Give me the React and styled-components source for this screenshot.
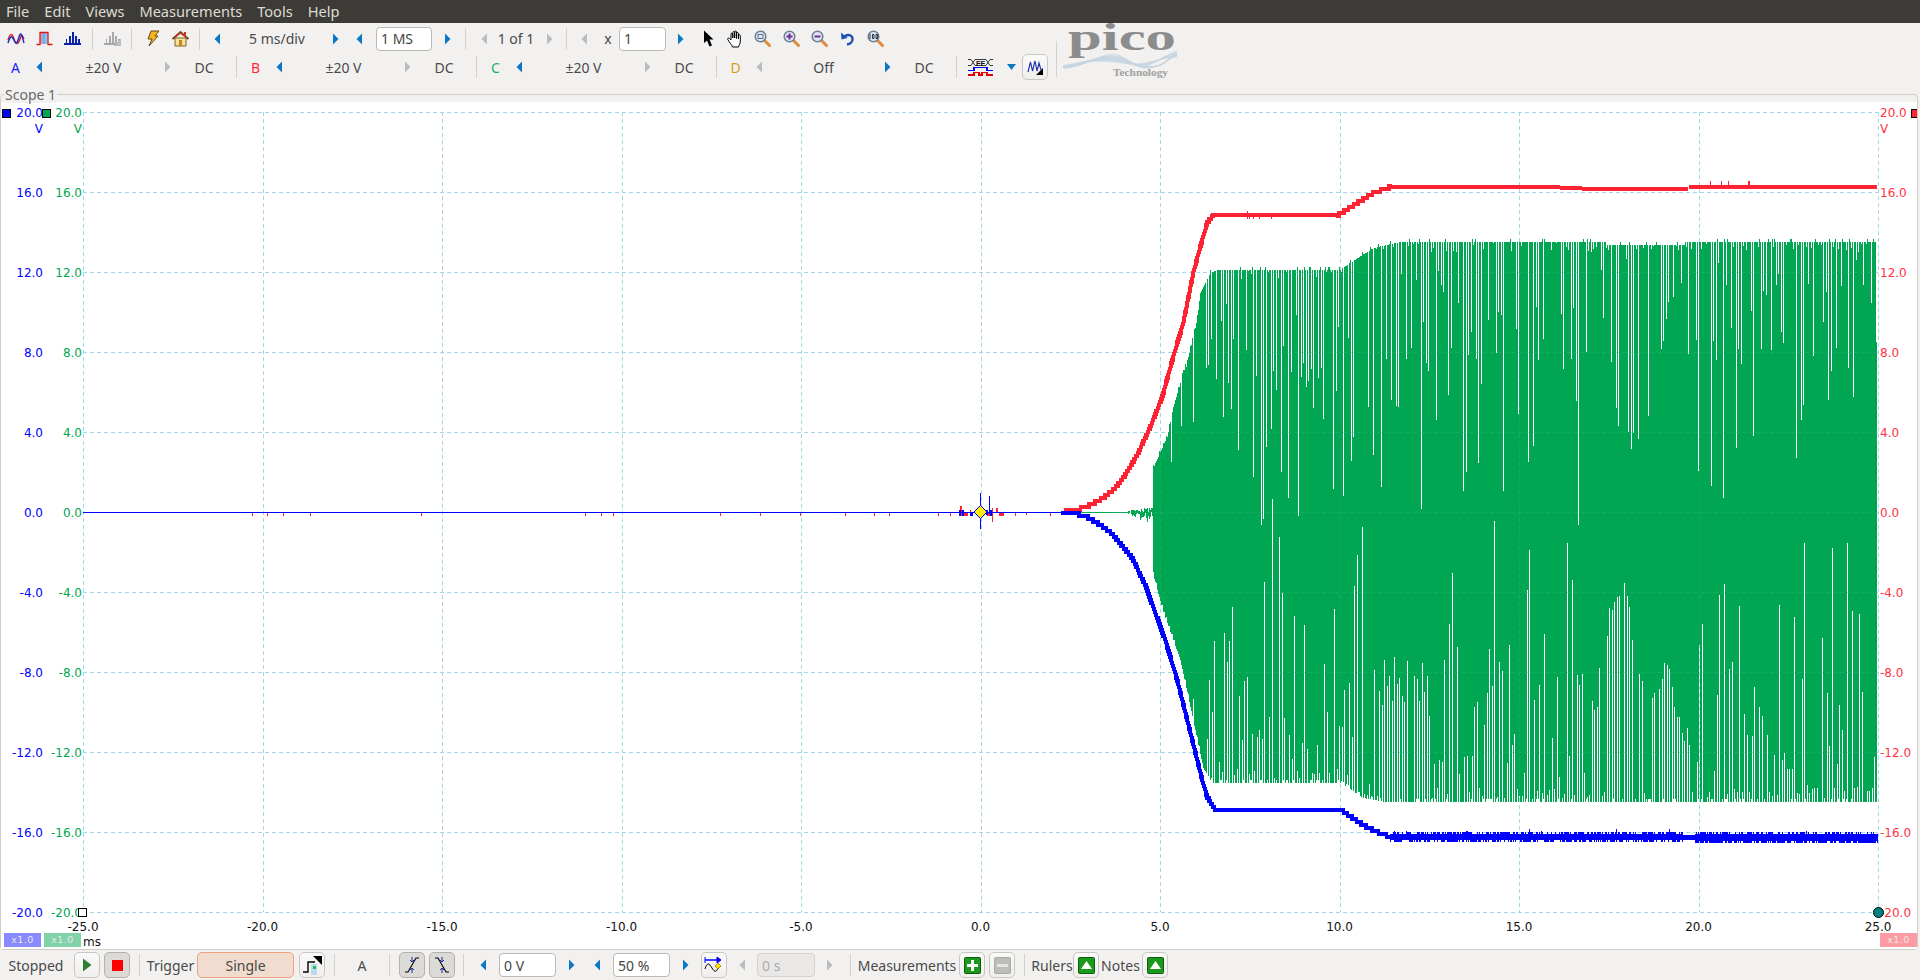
import React from 'react';
import styled, { createGlobalStyle } from 'styled-components';

const GlobalStyle = createGlobalStyle`
  html, body { margin: 0; padding: 0; height: 980px; background: #f2f1f0; overflow: hidden; }
  body { font-family: "Noto Sans", "Open Sans", sans-serif; }
`;

const UI_FONT = '"Noto Sans", "Open Sans", sans-serif';
const BLUE = '#0000ff';
const RED = '#ff2233';
const GREEN = '#00a651';
const GRID = '#a6d9e8';

const Page = styled.div`
  width: 1920px;
  height: 980px;
  overflow: hidden;
  display: flex;
  flex-direction: column;
  background: #f2f1f0;
  color: #4a4a4a;
  font: 14px ${UI_FONT};
`;
const MenuBar = styled.div`
  height: 23px;
  flex: none;
  display: flex;
  align-items: center;
  padding-left: 6px;
  gap: 15px;
  background: #3c3b37;
  color: #dfdbd2;
  font-size: 14.600px;
  line-height: 23px;
`;
const Toolbar = styled.div`
  height: 71px;
  flex: none;
  display: flex;
`;
const ToolbarRows = styled.div`
  width: 1050px;
  padding-top: 1px;
`;
const Row = styled.div`
  height: 28px;
  display: flex;
  align-items: center;
`;
const RowOne = styled(Row)`
  height: 29px;
  padding-left: 2px;
`;
const Slot = styled.div`
  width: ${p => p.$w}px;
  flex: none;
  height: 100%;
  display: flex;
  align-items: center;
  justify-content: center;
  white-space: nowrap;
  color: ${p => p.$c || 'inherit'};
`;
const Sep = styled.div`
  width: 1px;
  height: ${p => p.$h || 22}px;
  background: #d3d1cd;
`;
const Channel = styled.div`
  width: 240px;
  height: 100%;
  flex: none;
  display: flex;
`;
const Field = styled.input`
  width: ${p => p.$w}px;
  height: 24px;
  flex: none;
  box-sizing: border-box;
  padding: 0 4px;
  border: 1px solid ${p => p.disabled ? '#d4d2ce' : '#bcb9b4'};
  border-radius: 4px;
  background: ${p => p.disabled ? '#eae8e6' : '#fff'};
  color: ${p => p.disabled ? '#aaa' : '#444'};
  font: 14px ${UI_FONT};
`;
const ToolButton = styled.div`
  width: 26px;
  height: 26px;
  flex: none;
  box-sizing: border-box;
  display: flex;
  align-items: center;
  justify-content: center;
  border: 1px solid ${p => p.$pressed ? '#b4b2ae' : '#c9c7c3'};
  border-radius: 5px;
  background: ${p => p.$pressed ? '#dcdad7' : 'linear-gradient(#fbfafa, #f0efed)'};
`;
const TriggerMode = styled.div`
  width: 97px;
  height: 26px;
  box-sizing: border-box;
  display: flex;
  align-items: center;
  justify-content: center;
  border: 1px solid #eca283;
  border-radius: 5px;
  background: #f1dccf;
`;
const LogoWrap = styled.div`
  margin: 2px 0 0 1px;
  svg { overflow: visible; display: block; }
`;
const ScopePanel = styled.div`
  position: relative;
  flex: none;
  width: 1918px;
  height: 856px;
  box-sizing: border-box;
  padding-top: 7px;
  border: 1px solid #d0cec9;
  border-radius: 4px;
  background: #f2f1f0;
`;
const Legend = styled.div`
  position: absolute;
  left: 3px;
  top: -9px;
  padding: 0 1px;
  background: #f2f1f0;
  color: #6a6a6a;
  font-size: 14px;
  line-height: 17px;
`;
const Plot = styled.svg`
  display: block;
  background: #fff;
`;
const AxisText = styled.text`
  font: 12px "DejaVu Sans", sans-serif;
  fill: ${p => p.$c};
  text-anchor: ${p => p.$anchor || 'start'};
`;
const Badge = styled.div`
  position: absolute;
  top: 838px;
  left: ${p => p.$left}px;
  width: 37px;
  height: 14px;
  background: ${p => p.$bg};
  color: #e8e8e8;
  font: 9.500px/14px "DejaVu Sans", sans-serif;
  letter-spacing: 0.4px;
  text-align: center;
`;
const BottomBar = styled.div`
  height: 30px;
  flex: none;
  display: flex;
  align-items: center;
`;

/* ---- chart data ---- */
const X0 = 83, X1 = 1878, Y0 = 112, Y1 = 912, ZERO = 512;
const STEP_X = (X1 - X0) / 10;

const seeded = seed => () => {
  seed = (seed + 0x6d2b79f5) | 0;
  let t = Math.imul(seed ^ (seed >>> 15), 1 | seed);
  t = (t + Math.imul(t ^ (t >>> 7), 61 | t)) ^ t;
  return ((t ^ (t >>> 14)) >>> 0) / 4294967296;
};

const interp = (pts, x) => {
  if (x <= pts[0][0]) return pts[0][1];
  for (let i = 1; i < pts.length; i++) {
    if (x <= pts[i][0]) {
      const [a, b] = pts[i - 1];
      const [c, d] = pts[i];
      return b + (d - b) * (x - a) / (c - a);
    }
  }
  return pts[pts.length - 1][1];
};
const bump = (x, c, w) => Math.exp(-((x - c) * (x - c)) / (2 * w * w));

const topEnv = [[1153, 468], [1160, 452], [1167, 437], [1173, 407], [1183, 373], [1188, 357], [1193, 337], [1197, 318], [1200, 293], [1210, 273], [1217, 270], [1340, 270], [1345, 266], [1373, 248], [1400, 242], [1605, 242], [1606, 245], [1684, 245], [1685, 242], [1878, 242]];
const botEnv = [[1153, 575], [1163, 612], [1173, 640], [1180, 660], [1188, 697], [1197, 740], [1203, 768], [1212, 783], [1340, 783], [1345, 786], [1363, 798], [1385, 802], [1878, 802]];

// white slits cut from the top and the bottom of the burst
const topDepth = (rnd, x) => {
  const u = rnd();
  if (x > 1605 && x < 1682) return u < 0.3 ? rnd() * 15 : 10 + 170 * bump(x, 1632, 20) + rnd() * 45;
  if (u < 0.28) return 1 + rnd() * 10;
  if (u < 0.7) return 20 + rnd() * 100;
  if (u < 0.93) return 100 + rnd() * 130;
  return 230 + rnd() * 60;
};
const botDepth = (rnd, x) => {
  const u = rnd();
  if (x > 1380 && x < 1430) return 85 + rnd() * 60;
  if (x > 1590 && x < 1690) {
    if (u < 0.25) return 3 + rnd() * 10;
    return 30 + 170 * bump(x, 1618, 16) + 80 * bump(x, 1665, 12) + rnd() * 30;
  }
  if (u < 0.32) return 3 + rnd() * 12;
  if (u < 0.72) return 20 + rnd() * 110;
  if (u < 0.94) return 130 + rnd() * 100;
  return 230 + rnd() * 55;
};

const buildGreen = () => {
  const rnd = seeded(2024);
  const topCut = {}, botCut = {};
  for (let x = 1153; x < 1878; x += 2.5) {
    const px = Math.round(x);
    if (x > 1205) {
      if (rnd() < 0.78) topCut[px] = topDepth(rnd, x);
      if (rnd() < 0.9) botCut[Math.round(x + 1)] = botDepth(rnd, x);
    } else if (rnd() < 0.3) {
      topCut[px] = 4 + rnd() * 90;
      if (rnd() < 0.4) botCut[px] = 4 + rnd() * 50;
    }
  }
  let d = '';
  for (let c = 1128; c < 1153; c++) {
    const a = (c - 1128) / 25;
    d += `M${c + 0.5} ${Math.round(ZERO - rnd() * (1 + a * 5))}V${Math.round(ZERO + rnd() * (2 + a * 12))}`;
  }
  for (let c = 1153; c < 1877; c++) {
    const top = Math.round(interp(topEnv, c)) - (rnd() < 0.14 ? 3 : 0);
    const bot = Math.round(interp(botEnv, c)) - (rnd() < 0.18 ? 3 : 0);
    const a = top + (topCut[c] || 0);
    const b = bot - (botCut[c] || 0);
    if (b > a) d += `M${c + 0.5} ${Math.round(a)}V${Math.round(b)}`;
  }
  return d;
};

// ramps of the channel traces are stepped blocks, as the sampled display draws them
const blocky = pts => {
  const seen = new Set();
  let d = '';
  for (let x = pts[0][0]; x <= pts[pts.length - 1][0]; x += 0.5) {
    const qx = Math.round(x);
    const qy = Math.round(interp(pts, x) / 3) * 3;
    const key = `${qx}:${qy}`;
    if (!seen.has(key)) {
      seen.add(key);
      d += `M${qx - 2} ${qy - 2}h4v4h-4z`;
    }
  }
  return d;
};

const redRampA = [[1066, 511], [1083, 508], [1092, 504], [1103, 498], [1115, 488], [1125, 475], [1138, 453], [1150, 427], [1162, 397], [1173, 357], [1183, 323], [1193, 273], [1200, 247], [1207, 223], [1213, 215]];
const redRampB = [[1338, 215], [1343, 212], [1357, 203], [1373, 193], [1390, 187]];
const blueRampA = [[1063, 514], [1077, 514], [1087, 517], [1097, 523], [1110, 532], [1123, 547], [1132, 558], [1145, 585], [1165, 640], [1177, 680], [1187, 720], [1195, 752], [1202, 780], [1207, 797], [1215, 810]];
const blueRampB = [[1342, 810], [1345, 813], [1363, 825], [1377, 832], [1390, 837]];

const buildRedTicks = () => {
  const rnd = seeded(77);
  let d = '';
  for (let x = 1236; x < 1275; x += 2 + Math.floor(rnd() * 5)) d += `M${x + 0.5} ${rnd() > 0.5 ? 211 : 213}V${rnd() > 0.5 ? 219 : 217}`;
  [1710, 1721, 1728, 1748, 1749].forEach(x => { d += `M${x + 0.5} 181V186`; });
  return d;
};
const buildBlueNoise = () => {
  const rnd = seeded(5);
  let d = '';
  for (let x = 1390; x < 1878; x++) {
    const flat = x > 1682 && x < 1695;
    const early = x < 1689;
    const t = flat ? 835 : (rnd() < 0.5 ? 832 : 834) - (rnd() < 0.015 ? 3 : 0);
    const b = flat ? 840 : early ? (rnd() < 0.55 ? 842 : 840) : (rnd() < 0.75 ? 843 : 841);
    d += `M${x + 0.5} ${t}V${b}`;
  }
  return d;
};

const GREEN_PATH = buildGreen();
const RED_PATH = blocky(redRampA) + blocky(redRampB);
const BLUE_PATH = blocky(blueRampA) + blocky(blueRampB);
const RED_TICKS = buildRedTicks();
const BLUE_NOISE = buildBlueNoise();
const PRE_RED = [252, 267, 283, 310, 421, 585, 601, 613, 720, 760, 800, 845, 874, 889, 938, 950, 1000, 1015, 1050];
const NEAR_ZERO_RED = [[960, 506, 2, 10], [963, 512, 5, 4], [970, 510, 1, 6], [987, 512, 3, 4], [992, 508, 1, 14], [996, 508, 2, 5], [999, 512, 1, 4], [1001, 512, 3, 4], [1015, 512, 1, 3], [1026, 512, 1, 3]];
const NEAR_ZERO_BLUE = [[959, 510, 2, 6], [962, 510, 2, 6], [970, 512, 3, 4], [976, 510, 2, 5], [980, 493, 1, 36], [986, 510, 2, 5], [989, 496, 1, 18], [990, 510, 2, 6]];
const VALUES = [20, 16, 12, 8, 4, 0, -4, -8, -12, -16, -20];
const TIMES = [-25, -20, -15, -10, -5, 0, 5, 10, 15, 20, 25];

const GridLines = ({ opacity }) => (
  <g stroke={GRID} strokeWidth="1" strokeDasharray="4 3" opacity={opacity} shapeRendering="crispEdges">
    {VALUES.map((v, i) => <line key={v} x1={X0} x2={X1} y1={Y0 + i * 80 + 0.5} y2={Y0 + i * 80 + 0.5} />)}
    {TIMES.map((t, i) => {
      const x = Math.round(X0 + i * STEP_X) + 0.5;
      return <line key={t} x1={x} x2={x} y1={Y0} y2={Y1} />;
    })}
  </g>
);

const Chart = () => (
  <Plot width="1916" height="847" viewBox="1 102 1916 847">
    <GridLines opacity={1} />
    <g shapeRendering="crispEdges" fill="none">
      <path d="M1077 512.5H1128" stroke={GREEN} strokeWidth="1" />
      <path d={GREEN_PATH} stroke={GREEN} strokeWidth="1" />
    </g>
    <GridLines opacity={0.12} />
    <g shapeRendering="crispEdges" fill="none">
      <path d={PRE_RED.map(x => `M${x + 0.5} 512V516`).join('')} stroke={RED} />
      {NEAR_ZERO_RED.map(([x, y, w, h]) => <rect key={`${x}r`} x={x} y={y} width={w} height={h} fill={RED} />)}
      <path d={RED_PATH} fill={RED} />
      <path d="M1211 215H1340M1388 187H1560M1560 188H1582M1582 189H1688M1689 187H1877" stroke={RED} strokeWidth="4" />
      <path d={RED_TICKS} stroke={RED} />
      <path d="M83 512.5H1066" stroke={BLUE} strokeWidth="1" />
      {NEAR_ZERO_BLUE.map(([x, y, w, h]) => <rect key={`${x}b`} x={x} y={y} width={w} height={h} fill={BLUE} />)}
      <path d={BLUE_PATH} fill={BLUE} />
      <path d="M1213 810H1344" stroke={BLUE} strokeWidth="4" />
      <path d={BLUE_NOISE} stroke={BLUE} />
    </g>
    <path d="M980.5 505.5L987 512L980.5 518.5L974 512Z" fill="#ffee00" stroke={BLUE} strokeWidth="1" />

    {VALUES.map((v, i) => {
      const y = Y0 + i * 80 + 5;
      const s = v.toFixed(1);
      return (
        <g key={v}>
          <AxisText x={43} y={y} $c={BLUE} $anchor="end">{s}</AxisText>
          <AxisText x={82} y={y} $c={GREEN} $anchor="end">{s}</AxisText>
          <AxisText x={1880} y={y} $c="#ff3344">{s}</AxisText>
        </g>
      );
    })}
    <AxisText x={43} y={133} $c={BLUE} $anchor="end">V</AxisText>
    <AxisText x={82} y={133} $c={GREEN} $anchor="end">V</AxisText>
    <AxisText x={1880} y={133} $c="#ff3344">V</AxisText>
    {TIMES.map((t, i) => (
      <AxisText key={t} x={X0 + i * STEP_X} y={931} $c="#111" $anchor="middle">{t.toFixed(1)}</AxisText>
    ))}
    <AxisText x={83} y={946} $c="#111">ms</AxisText>

    <g shapeRendering="crispEdges" stroke="#000">
      <rect x="2.5" y="109.5" width="8" height="8" fill={BLUE} />
      <rect x="42.5" y="109.5" width="8" height="8" fill={GREEN} />
      <rect x="1911.5" y="109.5" width="7" height="8" fill={RED} />
      <rect x="78.5" y="908.5" width="8" height="8" fill="#fff" />
    </g>
    <circle cx="1878.5" cy="912.5" r="5" fill="#008080" stroke="#000" />
  </Plot>
);

/* ---- icons ---- */
const Arrow = ({ dir = 'left', off }) => (
  <svg width="7" height="12" viewBox="0 0 7 12">
    <path d={dir === 'left' ? 'M6 0.5V11.5L0.5 6Z' : 'M1 0.5V11.5L6.5 6Z'} fill={off ? '#b9bcbc' : '#0a78c4'} />
  </svg>
);
const WaveIcon = () => (
  <svg width="18" height="14" viewBox="0 0 18 14" fill="none" strokeWidth="1.5">
    <path d="M1 8C3 1 5 1 7 7S11 13 13 7S15 3 17 7" stroke="#e81c24" />
    <path d="M1 11C3 4 5 3 7 8S10 12 12 5S15 4 17 11" stroke="#1c34c8" />
  </svg>
);
const PulseIcon = () => (
  <svg width="17" height="15" viewBox="0 0 17 15" fill="none">
    <defs>
      <linearGradient id="pulseFill"><stop offset="0" stopColor="#f0a0a0" /><stop offset=".5" stopColor="#60b0f0" /><stop offset="1" stopColor="#a0d8f8" /></linearGradient>
    </defs>
    <rect x="4" y="2" width="8" height="11" fill="url(#pulseFill)" />
    <path d="M0.5 13.5H4V1.5H12V13.5H16.5" stroke="#e01818" strokeWidth="1.3" />
  </svg>
);
const BarsIcon = ({ color = '#0a22a8', shade }) => (
  <svg width="17" height="15" viewBox="0 0 17 15" shapeRendering="crispEdges">
    <path d="M0 12H17V13.5H0ZM1.5 8H3V12H1.5ZM5 5H6.5V12H5ZM8 1H9.500V12H8ZM11 5H12.5V12H11ZM14 8H15.500V12H14Z" fill={color} />
    {shade && <path d="M9 15L17 7V15Z" fill="#bdbdbd" />}
  </svg>
);
const BoltIcon = () => (
  <svg width="14" height="17" viewBox="0 0 14 17">
    <path d="M5 1H13L9 6H12L3 16L6 9H2Z" fill="#f5b51e" stroke="#6a4a10" strokeWidth="1" strokeLinejoin="round" />
  </svg>
);
const HomeIcon = () => (
  <svg width="17" height="16" viewBox="0 0 17 16">
    <path d="M3 7H14V15H3Z" fill="#f6e39a" stroke="#7a6420" />
    <rect x="7" y="9" width="3" height="6" fill="#c88428" />
    <path d="M0.500 8L8.500 1L16.500 8" fill="none" stroke="#6a4418" strokeWidth="1.800" />
    <path d="M3 6.500L8.500 2L14 6.500" fill="none" stroke="#d83a20" strokeWidth="1.200" />
    <rect x="12" y="1" width="2" height="3.500" fill="#c83418" />
  </svg>
);
const CursorIcon = () => (
  <svg width="11" height="17" viewBox="0 0 11 17">
    <path d="M1 0.500V13L4 10.500L6.500 16.500L9 15.500L6.500 9.500H10.500Z" fill="#000" />
  </svg>
);
const HandIcon = () => (
  <svg width="17" height="18" viewBox="0 0 17 18" fill="#fff" stroke="#000" strokeWidth="1" strokeLinejoin="round">
    <path d="M4 10V4C4 2.800 5.800 2.800 5.800 4V8V2.500C5.800 1.200 7.700 1.200 7.700 2.500V8V2C7.700 .8 9.600 .8 9.600 2V8.500V3.500C9.600 2.300 11.500 2.300 11.500 3.500V9V5.500C11.500 4.500 13.300 4.500 13.300 5.500V11C13.300 14 12 15 11.500 17H5.500C5 15 3.500 14 2 11.500L0.800 9.500C.2 8.300 1.800 7.500 2.500 8.500Z" />
  </svg>
);
const Lens = ({ children }) => (
  <svg width="17" height="17" viewBox="0 0 17 17">
    <path d="M10 10L15.500 15.500" stroke="#e08c3c" strokeWidth="3" strokeLinecap="round" />
    <circle cx="6.500" cy="6.500" r="5.300" fill="#dde6f2" stroke="#6c7f96" strokeWidth="1.500" />
    {children}
  </svg>
);
const UndoIcon = () => (
  <svg width="15" height="15" viewBox="0 0 15 15" fill="none">
    <path d="M4 6C7 3 12 3.500 12.500 7.500C13 11 10 13 7 13.500" stroke="#1e4fb4" strokeWidth="2.400" />
    <path d="M1 1.500L1.500 8.500L7.500 7Z" fill="#1e4fb4" />
  </svg>
);
const DigitalIcon = () => (
  <svg width="25" height="17" viewBox="0 0 25 17" fill="none">
    <path d="M0 .5H3L7 6.500H18L22 .5H25M0 6.500H3L7 .5H18L22 6.500H25" stroke="#222" strokeWidth=".9" />
    <text x="12.500" y="6.500" fontFamily="Liberation Sans" fontSize="7.500" fontWeight="700" textAnchor="middle" fill="#111">FF</text>
    <path d="M0 11.500H6V8.500H19V11.500H25" stroke={BLUE} strokeWidth="1.300" shapeRendering="crispEdges" />
    <path d="M0 16H6V13.500H11V16H14V13.500H19V16H25" stroke="#e00000" strokeWidth="1.300" shapeRendering="crispEdges" />
  </svg>
);
const DropIcon = () => (
  <svg width="9" height="6" viewBox="0 0 9 6"><path d="M0 0H9L4.500 6Z" fill="#0a78c4" /></svg>
);
const ProbeWaveIcon = () => (
  <svg width="17" height="17" viewBox="0 0 17 17" fill="none">
    <path d="M1 13L3.500 3L5.500 12L8 2L10 12L12 4L14 11" stroke="#1c2ca8" strokeWidth="1.100" />
    <path d="M16 9V16H9Z" fill="#000" />
  </svg>
);
const PlayIcon = () => (
  <svg width="10" height="14" viewBox="0 0 10 14"><path d="M1 0.500V13.500L9.500 7Z" fill="#2f7d2f" /></svg>
);
const StopIcon = () => (
  <svg width="11" height="11" viewBox="0 0 11 11"><rect width="11" height="11" fill="#ff0000" /></svg>
);
const TriggerIcon = () => (
  <svg width="20" height="20" viewBox="0 0 20 20" fill="none">
    <rect x="9" y="9" width="6" height="11" fill="#bcd8f4" />
    <path d="M1 17H6V7H13" stroke="#000" strokeWidth="1.400" />
    <rect x="11" y="11" width="3" height="3" fill="#20c040" />
    <path d="M11 1H20V10Z" fill="#000" />
  </svg>
);
const EdgeIcon = ({ falling }) => (
  <svg width="16" height="18" viewBox="0 0 16 18" fill="none" transform={falling ? 'scale(-1 1)' : undefined}>
    <path d="M1 16H4L12 2H15" stroke="#000" strokeWidth="1.100" />
    <path d="M8 1V6M6 4L8 6L10 4M8 12V17M6 14L8 12L10 14" stroke="#1c2ca8" strokeWidth="1" />
  </svg>
);
const DelayIcon = () => (
  <svg width="20" height="20" viewBox="0 0 20 20" fill="none">
    <path d="M1 5H15" stroke={BLUE} strokeWidth="1.500" />
    <path d="M1 2V8M13 2L17 5L13 8Z" fill={BLUE} stroke={BLUE} />
    <path d="M1 14C3 7 5 8 8 13S12 17 15 12" stroke="#000" strokeWidth="1" />
    <path d="M14 8L17 11L14 14L11 11Z" fill="#ffdd00" stroke="#806000" strokeWidth=".6" />
  </svg>
);
const SquareGlyph = ({ kind }) => {
  const fill = kind === 'off' ? '#bdbdb9' : '#1a9a1a';
  const mark = kind === 'plus' ? 'M7 3H10V7H14V10H10V14H7V10H3V7H7Z'
    : kind === 'off' ? 'M3 7H14V10H3Z' : 'M8.500 4L14 12H3Z';
  return (
    <svg width="17" height="17" viewBox="0 0 17 17">
      <rect x=".5" y=".5" width="16" height="16" rx="1" fill={fill} stroke={kind === 'off' ? '#a8a8a4' : '#0c5c0c'} />
      <path d={mark} fill={kind === 'off' ? '#e4e4e0' : '#fff'} />
    </svg>
  );
};
const PicoLogo = () => (
  <svg width="118" height="54" viewBox="0 0 118 54" fill="none">
    <text x="5" y="25" fontFamily="Liberation Serif" fontSize="37" fontWeight="700" textLength="108" lengthAdjust="spacingAndGlyphs" fill="#8c8c8c">pico</text>
    {[0, 1, 2, 3, 4, 5, 6].map(i => (
      <g key={i} stroke="#c5d4df" strokeWidth=".7">
        <path d={`M0 ${43 - i * 0.4}C20 ${43 - i}, 32 ${29 + i}, 50 ${31 + i}S72 ${43 - i * 0.5}, 82 ${41 - i * 0.5}S100 ${31 + i * 0.3}, 114 ${26 + i}`} />
        <path d={`M2 43C22 ${41 - i}, 36 31, ${48 + i * 2} ${29 + i * 1.4}S70 ${45 - i}, 86 ${43 - i * 0.3}S104 33, 114 ${28 + i * 0.4}`} />
      </g>
    ))}
    <text x="50" y="51" fontFamily="Liberation Serif" fontSize="10" fontWeight="700" textLength="55" lengthAdjust="spacingAndGlyphs" fill="#a0a0a0">Technology</text>
  </svg>
);

const ChannelGroup = ({ letter, color, range, on, leftOff }) => (
  <Channel>
    <Slot $w={31} $c={color}>{letter}</Slot>
    <Slot $w={16}><Arrow off={leftOff} /></Slot>
    <Slot $w={113}>{range}</Slot>
    <Slot $w={14}><Arrow dir="right" off={!on} /></Slot>
    <Slot $w={60}>DC</Slot>
    <Slot $w={4}><Sep /></Slot>
  </Channel>
);

export default function App() {
  return (
    <Page>
      <GlobalStyle />
      <MenuBar>
        {['File', 'Edit', 'Views', 'Measurements', 'Tools', 'Help'].map(m => <span key={m}>{m}</span>)}
      </MenuBar>
      <Toolbar>
        <ToolbarRows>
          <RowOne>
            <Slot $w={28}><WaveIcon /></Slot>
            <Slot $w={28}><PulseIcon /></Slot>
            <Slot $w={28}><BarsIcon /></Slot>
            <Slot $w={12}><Sep /></Slot>
            <Slot $w={28}><BarsIcon color="#a8a8a8" shade /></Slot>
            <Slot $w={10}><Sep /></Slot>
            <Slot $w={33}><BoltIcon /></Slot>
            <Slot $w={23}><HomeIcon /></Slot>
            <Slot $w={14}><Sep /></Slot>
            <Slot $w={22}><Arrow /></Slot>
            <Slot $w={98}>5 ms/div</Slot>
            <Slot $w={18}><Arrow dir="right" /></Slot>
            <Slot $w={30}><Arrow /></Slot>
            <Slot $w={60}><Field $w={56} value="1 MS" readOnly /></Slot>
            <Slot $w={26}><Arrow dir="right" /></Slot>
            <Slot $w={10}><Sep /></Slot>
            <Slot $w={28}><Arrow off /></Slot>
            <Slot $w={36}>1 of 1</Slot>
            <Slot $w={30}><Arrow dir="right" off /></Slot>
            <Slot $w={4}><Sep /></Slot>
            <Slot $w={33}><Arrow off /></Slot>
            <Slot $w={14}>x</Slot>
            <Slot $w={55}><Field $w={47} value="1" readOnly /></Slot>
            <Slot $w={20}><Arrow dir="right" /></Slot>
            <Slot $w={36}><CursorIcon /></Slot>
            <Slot $w={18}><HandIcon /></Slot>
            <Slot $w={36}><Lens><path d="M4 4.500H9V8.500H4Z" fill="none" stroke="#5a6c90" /></Lens></Slot>
            <Slot $w={22}><Lens><path d="M5.500 3.500H7.500V5.500H9.500V7.500H7.500V9.500H5.500V7.500H3.500V5.500H5.500Z" fill="#7a2a9a" /></Lens></Slot>
            <Slot $w={34}><Lens><path d="M3.500 5.500H9.500V7.500H3.500Z" fill="#7a2a9a" /></Lens></Slot>
            <Slot $w={22}><UndoIcon /></Slot>
            <Slot $w={34}><Lens><path d="M3 4V9M5.500 4.500H7V8.500H5.500ZM9 4.500H10.500V8.500H9Z" fill="none" stroke="#222" strokeWidth=".9" /></Lens></Slot>
          </RowOne>
          <Row>
            <ChannelGroup letter="A" color="#1c1cff" range="±20 V" />
            <ChannelGroup letter="B" color="#ff2b3c" range="±20 V" />
            <ChannelGroup letter="C" color="#12b36a" range="±20 V" />
            <ChannelGroup letter="D" color="#d9a021" range="Off" on leftOff />
            <Slot $w={41}><DigitalIcon /></Slot>
            <Slot $w={20}><DropIcon /></Slot>
            <Slot $w={28}><ToolButton><ProbeWaveIcon /></ToolButton></Slot>
          </Row>
        </ToolbarRows>
        <Slot $w={12}><Sep $h={36} /></Slot>
        <LogoWrap><PicoLogo /></LogoWrap>
      </Toolbar>
      <ScopePanel>
        <Legend>Scope 1</Legend>
        <Chart />
        <Badge $left={3} $bg="#8a8aff">x1.0</Badge>
        <Badge $left={43} $bg="#80d2a8">x1.0</Badge>
        <Badge $left={1879} $bg="#ff9aa2">x1.0</Badge>
      </ScopePanel>
      <BottomBar>
        <Slot $w={72}>Stopped</Slot>
        <Slot $w={30}><ToolButton><PlayIcon /></ToolButton></Slot>
        <Slot $w={30}><ToolButton $pressed><StopIcon /></ToolButton></Slot>
        <Slot $w={14}><Sep /></Slot>
        <Slot $w={49}>Trigger</Slot>
        <Slot $w={101}><TriggerMode>Single</TriggerMode></Slot>
        <Slot $w={32}><ToolButton><TriggerIcon /></ToolButton></Slot>
        <Slot $w={12}><Sep /></Slot>
        <Slot $w={44}>A</Slot>
        <Slot $w={10}><Sep /></Slot>
        <Slot $w={35}><ToolButton $pressed><EdgeIcon /></ToolButton></Slot>
        <Slot $w={25}><ToolButton $pressed><EdgeIcon falling /></ToolButton></Slot>
        <Slot $w={18}><Sep /></Slot>
        <Slot $w={22}><Arrow /></Slot>
        <Slot $w={67}><Field $w={57} value="0 V" readOnly /></Slot>
        <Slot $w={20}><Arrow dir="right" /></Slot>
        <Slot $w={32}><Arrow /></Slot>
        <Slot $w={57}><Field $w={57} value="50 %" readOnly /></Slot>
        <Slot $w={30}><Arrow dir="right" /></Slot>
        <Slot $w={28}><ToolButton><DelayIcon /></ToolButton></Slot>
        <Slot $w={28}><Arrow off /></Slot>
        <Slot $w={60}><Field $w={58} value="0 s" disabled readOnly /></Slot>
        <Slot $w={26}><Arrow dir="right" off /></Slot>
        <Slot $w={16}><Sep /></Slot>
        <Slot $w={98}>Measurements</Slot>
        <Slot $w={32}><ToolButton><SquareGlyph kind="plus" /></ToolButton></Slot>
        <Slot $w={28}><ToolButton><SquareGlyph kind="off" /></ToolButton></Slot>
        <Slot $w={16}><Sep /></Slot>
        <Slot $w={40}>Rulers</Slot>
        <Slot $w={28}><ToolButton><SquareGlyph kind="up" /></ToolButton></Slot>
        <Slot $w={41}>Notes</Slot>
        <Slot $w={28}><ToolButton><SquareGlyph kind="up" /></ToolButton></Slot>
      </BottomBar>
    </Page>
  );
}
